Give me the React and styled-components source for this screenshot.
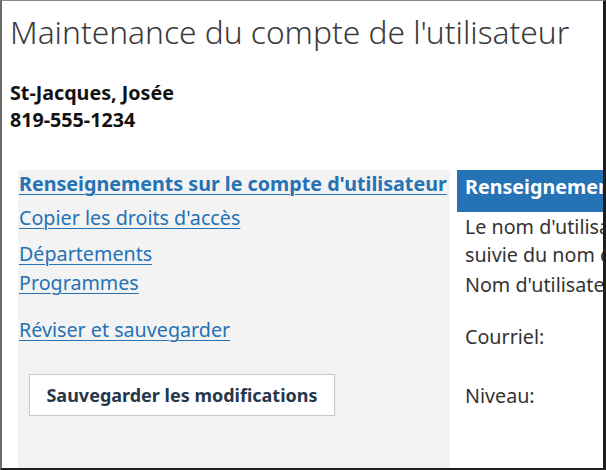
import React from "react";
import styled, { createGlobalStyle } from "styled-components";

const Global = createGlobalStyle`
  html, body { margin: 0; padding: 0; background: #fff; }
  body { font-family: "Noto Sans", "Open Sans", sans-serif; }
`;

const Frame = styled.div`
  box-sizing: border-box;
  width: 606px;
  height: 470px;
  overflow: hidden;
  background: #fff;
  border-top: 1px solid #8a8a8a;
  border-left: 2px solid #6a6a6a;
  border-right: 3px solid #1e1e1e;
  border-bottom: 2px solid #1e1e1e;
  padding: 0 0 0 8px;
`;

const Title = styled.h1`
  margin: 0;
  padding-top: 11px;
  font-family: "Noto Sans", "Open Sans", sans-serif;
  font-weight: 300;
  font-size: 31.7px;
  line-height: 40px;
  color: #3a3a3a;
  white-space: nowrap;
`;

const Person = styled.div`
  margin-top: 27px;
  font-weight: 700;
  font-size: 19.7px;
  line-height: 27px;
  color: #111;
`;

const Layout = styled.div`
  display: flex;
  align-items: stretch;
  gap: 7px;
  margin-top: 37px;
  margin-left: 8px;
  width: 800px;
`;

const Nav = styled.nav`
  box-sizing: border-box;
  flex: 0 0 432px;
  background: #f3f3f3;
  padding: 0 0 0 1px;
  min-height: 320px;
`;

const NavLink = styled.a`
  display: block;
  width: fit-content;
  font-size: 19.7px;
  line-height: 27px;
  color: #2572b4;
  text-decoration: underline;
  text-decoration-thickness: 1px;
  text-underline-offset: 3px;
  font-weight: ${(p) => (p.$active ? 700 : 400)};
  margin-top: ${(p) => p.$gap || 0}px;
  white-space: nowrap;
  cursor: pointer;
`;

const SaveButton = styled.button`
  box-sizing: border-box;
  display: block;
  margin: 31px 0 0 10px;
  width: 306px;
  height: 42px;
  padding: 0;
  background: #fff;
  border: 1.5px solid #c8c8c8;
  font-family: "Noto Sans", "Open Sans", sans-serif;
  font-size: 18px;
  font-weight: 700;
  color: #26374a;
  cursor: pointer;
`;

const Panel = styled.section`
  flex: 0 0 340px;
`;

const PanelHeader = styled.div`
  background: #2572b4;
  color: #fff;
  font-weight: 700;
  font-size: 19.7px;
  height: 42px;
  line-height: 34px;
  padding: 0 8px;
  white-space: nowrap;
`;

const PanelBody = styled.div`
  padding: 1px 0 0 8px;
  font-size: 19.7px;
  color: #333;
  white-space: nowrap;
`;

const Line = styled.div`
  line-height: 28px;
  margin-top: ${(p) => p.$gap || 0}px;
`;

export default function App() {
  return (
    <>
      <Global />
      <Frame>
        <Title>Maintenance du compte de l'utilisateur</Title>
        <Person>
          <div>St-Jacques, Josée</div>
          <div>819-555-1234</div>
        </Person>
        <Layout>
          <Nav>
            <NavLink $active>Renseignements sur le compte d'utilisateur</NavLink>
            <NavLink $gap={7}>Copier les droits d'accès</NavLink>
            <NavLink $gap={9}>Départements</NavLink>
            <NavLink $gap={2}>Programmes</NavLink>
            <NavLink $gap={20}>Réviser et sauvegarder</NavLink>
            <SaveButton>Sauvegarder les modifications</SaveButton>
          </Nav>
          <Panel>
            <PanelHeader>Renseignements sur le compte</PanelHeader>
            <PanelBody>
              <Line>Le nom d'utilisateur est composé de la première lettre</Line>
              <Line>suivie du nom de famille.</Line>
              <Line $gap={2}>Nom d'utilisateur:</Line>
              <Line $gap={24}>Courriel:</Line>
              <Line $gap={31}>Niveau:</Line>
            </PanelBody>
          </Panel>
        </Layout>
      </Frame>
    </>
  );
}
